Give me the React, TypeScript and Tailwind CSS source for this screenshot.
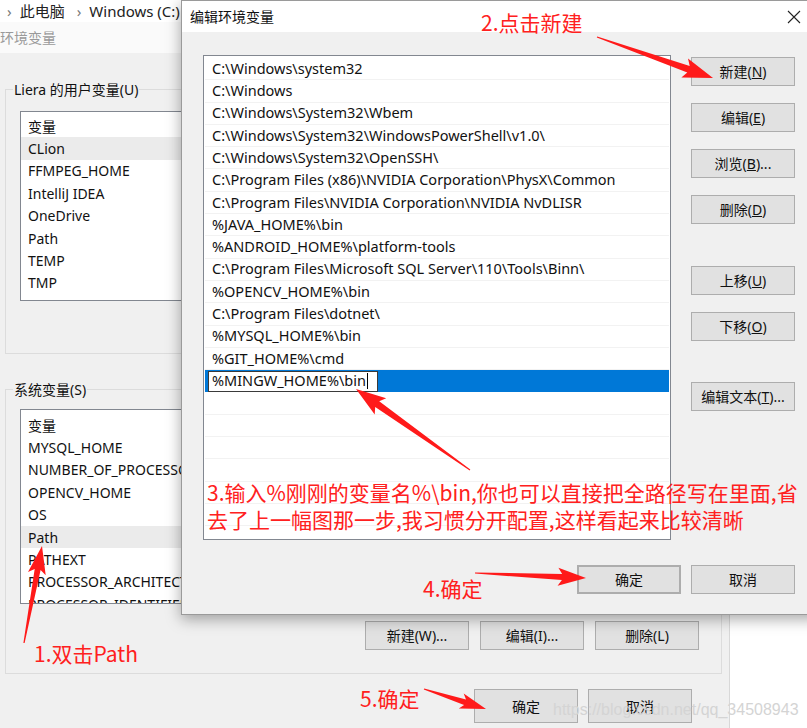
import React from "react";

const ui = { fontFamily: '"Noto Sans", "Noto Sans CJK SC", sans-serif' };
const red = { fontFamily: '"Noto Sans CJK SC", "Noto Sans", sans-serif' };

const userVars = ["CLion", "FFMPEG_HOME", "IntelliJ IDEA", "OneDrive", "Path", "TEMP", "TMP"];
const sysVars = [
  "MYSQL_HOME",
  "NUMBER_OF_PROCESSORS",
  "OPENCV_HOME",
  "OS",
  "Path",
  "PATHEXT",
  "PROCESSOR_ARCHITECTURE",
  "PROCESSOR_IDENTIFIER",
];

const paths = [
  "C:\\Windows\\system32",
  "C:\\Windows",
  "C:\\Windows\\System32\\Wbem",
  "C:\\Windows\\System32\\WindowsPowerShell\\v1.0\\",
  "C:\\Windows\\System32\\OpenSSH\\",
  "C:\\Program Files (x86)\\NVIDIA Corporation\\PhysX\\Common",
  "C:\\Program Files\\NVIDIA Corporation\\NVIDIA NvDLISR",
  "%JAVA_HOME%\\bin",
  "%ANDROID_HOME%\\platform-tools",
  "C:\\Program Files\\Microsoft SQL Server\\110\\Tools\\Binn\\",
  "%OPENCV_HOME%\\bin",
  "C:\\Program Files\\dotnet\\",
  "%MYSQL_HOME%\\bin",
  "%GIT_HOME%\\cmd",
];

// tapered red arrow, tail -> tip
function arrowPoints(x1: number, y1: number, x2: number, y2: number, head: number, hw: number, tw: number) {
  const dx = x2 - x1;
  const dy = y2 - y1;
  const len = Math.hypot(dx, dy);
  const ux = dx / len;
  const uy = dy / len;
  const nx = -uy;
  const ny = ux;
  const bx = x2 - ux * head;
  const by = y2 - uy * head;
  const wx = bx - ux * 4;
  const wy = by - uy * 4;
  const pts = [
    [x1 + nx * 0.6, y1 + ny * 0.6],
    [bx + nx * tw, by + ny * tw],
    [wx + nx * hw, wy + ny * hw],
    [x2, y2],
    [wx - nx * hw, wy - ny * hw],
    [bx - nx * tw, by - ny * tw],
    [x1 - nx * 0.6, y1 - ny * 0.6],
  ];
  return pts.map((p) => p[0].toFixed(1) + "," + p[1].toFixed(1)).join(" ");
}

function Btn({ children, className = "" }: { children: React.ReactNode; className?: string }) {
  return (
    <div
      className={
        "flex items-center justify-center h-[29px] w-[104px] bg-[#e1e1e1] border border-[#adadad] text-[14px] text-[#111] " +
        className
      }
    >
      {children}
    </div>
  );
}

const App = () => {
  return (
    <div className="relative w-[807px] h-[728px] overflow-hidden bg-white" style={ui}>
      {/* back window: 环境变量 */}
      <div className="absolute left-0 top-0 w-[730px] h-[728px] flex flex-col bg-[#f0f0f0] border-r border-[#d8d8d8]">
        <div className="h-[22px] bg-white flex items-center gap-[8px] pl-[7px] text-[15px] text-[#222]">
          <span className="text-[#777]">›</span>
          <span>此电脑</span>
          <span className="text-[#777] ml-[4px]">›</span>
          <span>Windows (C:)</span>
        </div>
        <div className="h-[31px] bg-[#fafafa] flex items-center text-[14px] text-[#9a9a9a]">环境变量</div>

        <fieldset className="mt-[26px] ml-[5px] mr-[7px] h-[275px] border border-[#dcdcdc] px-[14px]">
          <legend className="-ml-[7px] px-[1px] text-[14px] text-[#111]">Liera 的用户变量(U)</legend>
          <div className="mt-[11px] h-[190px] bg-white border border-[#828790] pt-[3px] text-[14px] text-[#111]">
            <div className="h-[22.4px] flex items-center pl-[7px]">变量</div>
            {userVars.map((v, i) => (
              <div key={v} className={"h-[22.4px] flex items-center pl-[7px] " + (i === 0 ? "bg-[#ebebeb]" : "")}>
                {v}
              </div>
            ))}
          </div>
        </fieldset>

        <fieldset className="mt-[25px] ml-[5px] mr-[7px] h-[295px] border border-[#dcdcdc] px-[14px]">
          <legend className="-ml-[7px] px-[1px] text-[14px] text-[#111]">系统变量(S)</legend>
          <div className="mt-[9px] h-[195px] overflow-hidden bg-white border border-[#828790] pt-[4px] text-[14px] text-[#111] whitespace-nowrap">
            <div className="h-[22.4px] flex items-center pl-[7px]">变量</div>
            {sysVars.map((v) => (
              <div key={v} className={"h-[22.4px] flex items-center pl-[7px] " + (v === "Path" ? "bg-[#ebebeb]" : "")}>
                {v}
              </div>
            ))}
          </div>
          <div className="mt-[17px] flex justify-end gap-[11px] pr-[8px]">
            <Btn className="w-[103px]">新建(W)...</Btn>
            <Btn className="w-[103px]">编辑(I)...</Btn>
            <Btn className="w-[103px]">删除(L)</Btn>
          </div>
        </fieldset>

        <div className="mt-[15px] flex justify-end gap-[10px] pr-[37px]">
          <Btn className="h-[34px] w-[103px]">确定</Btn>
          <Btn className="h-[34px] w-[103px]">取消</Btn>
        </div>
      </div>

      {/* front dialog: 编辑环境变量 */}
      <div className="absolute left-[181px] top-0 w-[640px] h-[615px] flex flex-col bg-[#f0f0f0] border border-[#9a9a9a] shadow-[0_4px_14px_rgba(0,0,0,0.35)]">
        <div className="h-[31px] bg-white flex items-center justify-between pl-[8px] pr-[19px] text-[14px] text-[#111]">
          <span>编辑环境变量</span>
          <svg width="14" height="14" viewBox="0 0 14 14">
            <path d="M1 1 L13 13 M13 1 L1 13" stroke="#222" strokeWidth="1.1" />
          </svg>
        </div>
        <div className="flex-1 flex flex-col pl-[21px] pr-[25px] pt-[23px]">
          <div className="flex gap-[20px]">
            <div className="w-[468px] h-[485px] bg-white border border-[#828790] pt-[2px] px-[1px] overflow-hidden text-[14.5px] text-[#111] whitespace-nowrap">
              {paths.map((p) => (
                <div key={p} className="h-[22.3px] flex items-center pl-[7px] border-b border-[#f2f2f2]">
                  {p}
                </div>
              ))}
              <div className="h-[22.3px] flex items-center bg-[#0078d7] pl-[3px]">
                <div className="h-[21px] w-[170px] bg-white border border-[#3a3a3a] flex items-center pl-[3px]">
                  <span>%MINGW_HOME%\bin</span>
                  <span className="w-[1px] h-[16px] bg-black ml-[1px]" />
                </div>
              </div>
              {[0, 1, 2, 3, 4, 5, 6].map((i) => (
                <div key={i} className="h-[22.3px] border-b border-[#f2f2f2]" />
              ))}
            </div>
            <div className="flex flex-col pt-[2px]">
              <div className="flex flex-col gap-[17px]">
                <Btn>新建(<u>N</u>)</Btn>
                <Btn>编辑(<u>E</u>)</Btn>
                <Btn>浏览(<u>B</u>)...</Btn>
                <Btn>删除(<u>D</u>)</Btn>
              </div>
              <div className="mt-[42px] flex flex-col gap-[17px]">
                <Btn>上移(<u>U</u>)</Btn>
                <Btn>下移(<u>O</u>)</Btn>
              </div>
              <div className="mt-[41px]">
                <Btn>编辑文本(<u>T</u>)...</Btn>
              </div>
            </div>
          </div>
          <div className="mt-[25px] flex justify-end gap-[10px]">
            <Btn className="border-[#0078d7] border-2">确定</Btn>
            <Btn>取消</Btn>
          </div>
        </div>
      </div>

      {/* watermark */}
      <div
        className="absolute left-[553px] top-[698px] text-[16px] text-[#d4d4d4] whitespace-nowrap"
        style={{ fontFamily: '"Liberation Sans", Arial, sans-serif' }}
      >
        https://blog.csdn.net/qq_34508943
      </div>

      {/* annotations */}
      <div className="absolute left-[481px] top-[8px] text-[21px] leading-[28px] text-[#ff2020]" style={red}>
        2.点击新建
      </div>
      <div className="absolute left-[207px] top-[479px] w-[600px] text-[21px] leading-[27px] text-[#ff2020]" style={red}>
        <div className="whitespace-nowrap">3.输入%刚刚的变量名%\bin,你也可以直接把全路径写在里面,省</div>
        <div className="whitespace-nowrap">去了上一幅图那一步,我习惯分开配置,这样看起来比较清晰</div>
      </div>
      <div className="absolute left-[423px] top-[574px] text-[21px] leading-[28px] text-[#ff2020]" style={red}>
        4.确定
      </div>
      <div className="absolute left-[34px] top-[639px] text-[21px] leading-[28px] text-[#ff2020]" style={red}>
        1.双击Path
      </div>
      <div className="absolute left-[360px] top-[684px] text-[21px] leading-[28px] text-[#ff2020]" style={red}>
        5.确定
      </div>

      <svg className="absolute left-0 top-0 pointer-events-none" width="807" height="728">
        <g fill="#ff1a1a">
          <polygon points={arrowPoints(597, 37, 713, 78, 26, 10, 3.5)} />
          <polygon points={arrowPoints(470, 470, 356, 389, 26, 10, 3.5)} />
          <polygon points={arrowPoints(475, 573, 586, 578, 24, 9, 3)} />
          <polygon points={arrowPoints(24, 643, 42, 546, 24, 9, 3)} />
          <polygon points={arrowPoints(424, 689, 486, 709, 22, 8, 3)} />
        </g>
      </svg>
    </div>
  );
};

export default App;
